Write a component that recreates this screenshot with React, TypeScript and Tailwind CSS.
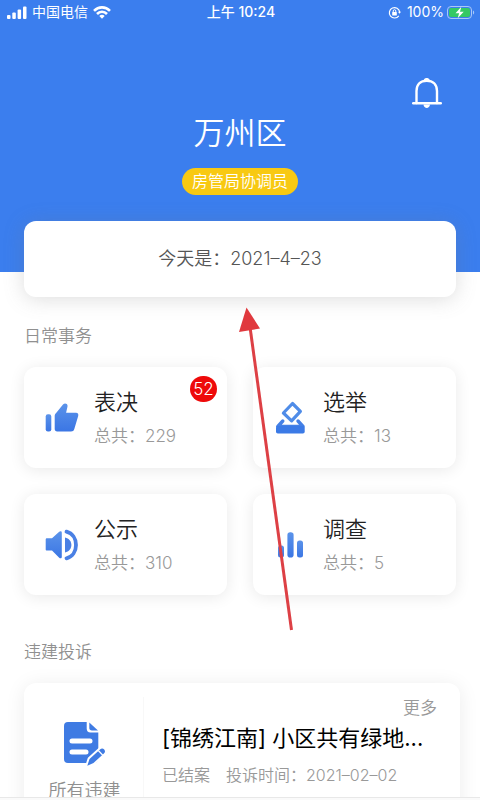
import React from 'react';

type Category = {
  title: string;
  total: number;
  badge?: number;
  icon: React.ReactNode;
};

const ThumbIcon = () => (
  <svg viewBox="0 0 34 34" className="h-[34px] w-[34px] shrink-0" fill="url(#iconBlue)" aria-hidden="true">
    <rect x="0.7" y="13.2" width="5.6" height="17.3" rx="2.2" />
    <path d="M9.7 15c0-1.2.4-2 1.2-2.8L18 3.6c1.2-1.5 2.7-1.5 3.8-.5.8.8.9 1.9.6 3l-1.3 5.7H31c2 0 2.7 1.5 2.2 3.2l-3.9 13c-.6 1.8-1.6 2.5-3.3 2.5H12.2c-1.6 0-2.5-.9-2.5-2.5z" />
  </svg>
);

const BallotIcon = () => (
  <svg viewBox="0 0 34 34" className="h-[34px] w-[34px] shrink-0" aria-hidden="true">
    <path d="M18.5 2.5L26.4 10.4 17.6 19.8 9.4 12z" fill="none" stroke="#4f8ce8" strokeWidth="3.2" strokeLinejoin="round" />
    <path d="M8.8 20L3.8 25.5H29L24 20" fill="none" stroke="#4480e6" strokeWidth="3.4" strokeLinejoin="round" strokeLinecap="round" />
    <rect x="2" y="25" width="28.7" height="7.5" rx="1.8" fill="#3b7ae6" />
  </svg>
);

const SpeakerIcon = () => (
  <svg viewBox="0 0 34 34" className="h-[34px] w-[34px] shrink-0" aria-hidden="true">
    <path d="M2 10.3H7L14.2 3.8c1.2-1 2.6-.6 2.6.9V28.9c0 1.500-1.400 1.900-2.600.9L7 22.600H2C1.100 22.600.7 22.100.7 21.400V11.500c0-.8.5-1.200 1.300-1.200z" fill="url(#iconBlue)" />
    <path d="M20 9.500c4 1 6.400 3.900 6.400 7.500s-2.400 6.500-6.400 7.500z" fill="#4a80e4" />
    <path d="M21.5 3.7C27.5 5.4 31 10.5 31 17s-3.5 11.700-9.500 13.300" fill="none" stroke="#4a80e4" strokeWidth="3.800" strokeLinecap="round" />
  </svg>
);

const BarsIcon = () => (
  <svg viewBox="0 0 34 34" className="h-[34px] w-[34px] shrink-0" fill="url(#iconBlue)" aria-hidden="true">
    <rect x="4" y="17.5" width="6" height="12" rx="2.5" />
    <rect x="13.4" y="4.3" width="6.2" height="25.2" rx="2.8" />
    <rect x="23" y="12.5" width="6" height="17" rx="2.5" />
  </svg>
);

const DocIcon = () => (
  <svg viewBox="0 0 42 45" className="h-[45px] w-[42px]" aria-hidden="true">
    <path d="M4 0H22.7V6.5c0 2.5 1.3 3.9 3.8 3.9H34.3V37c0 2.7-1.3 4-4 4H4c-2.7 0-4-1.3-4-4V4C0 1.3 1.3 0 4 0z" fill="#3f7be3" />
    <path d="M25.3.6L34 8.4H28c-1.8 0-2.7-.9-2.7-2.7z" fill="#3f7be3" />
    <path d="M8 19H26M8 30H22" stroke="#fff" strokeWidth="5" strokeLinecap="round" />
    <path d="M23.3 44L25.5 37 36 27.5c1.5-1.3 3-1.2 4.2.1 1.2 1.4 1 2.9-.3 4L29.5 41z" fill="#3f7be3" stroke="#fff" strokeWidth="4" strokeLinejoin="round" />
    <path d="M23.3 43.8L25.5 37 36 27.5c1.5-1.3 3-1.2 4.2.1 1.2 1.4 1 2.9-.3 4L29.5 41z" fill="#3f7be3" />
    <path d="M34.3 28.5L39 33.5" stroke="#fff" strokeWidth="1.2" />
  </svg>
);

const categories: Category[] = [
  { title: '表决', total: 229, badge: 52, icon: <ThumbIcon /> },
  { title: '选举', total: 13, icon: <BallotIcon /> },
  { title: '公示', total: 310, icon: <SpeakerIcon /> },
  { title: '调查', total: 5, icon: <BarsIcon /> },
];

const StatusBar = () => (
  <div className="grid h-6 grid-cols-3 items-center pr-[5px] pl-[7px] text-sm leading-6 font-normal">
    <div className="flex items-center gap-[5px]">
      <svg viewBox="0 0 20 13" className="h-[13px] w-5" fill="#fff" aria-hidden="true">
        <rect x="0" y="9" width="3.5" height="4" rx="1" />
        <rect x="5.3" y="6.5" width="3.5" height="6.5" rx="1" />
        <rect x="10.6" y="3.5" width="3.5" height="9.5" rx="1" />
        <rect x="16" y="0.5" width="3.5" height="12.5" rx="1" />
      </svg>
      <span>中国电信</span>
      <svg viewBox="0 0 18 13" className="h-[13px] w-[18px]" fill="none" stroke="#fff" strokeWidth="2.6" aria-hidden="true">
        <path d="M1 4.8C5.5.2 12.5.2 17 4.8" />
        <path d="M4 8C6.8 5 11.2 5 14 8" />
        <path d="M9 12.7L6.3 9.9c1.5-1.4 3.9-1.4 5.4 0z" fill="#fff" stroke="none" />
      </svg>
    </div>
    <div className="text-center font-medium">上午 10:24</div>
    <div className="flex items-center justify-end gap-[3px]">
      <svg viewBox="0 0 13 13" className="mr-[3px] h-[13px] w-[13px]" fill="none" stroke="#fff" strokeWidth="1.2" aria-hidden="true">
        <path d="M10.8 9.8A5.2 5.2 0 1 1 11.7 6" />
        <path d="M10 5.8h3l-1.5 2z" fill="#fff" stroke="none" />
        <rect x="4.2" y="6" width="4.6" height="3.4" rx="0.5" fill="#fff" stroke="none" />
        <path d="M5.2 6V5a1.3 1.3 0 0 1 2.6 0v1" strokeWidth="1" />
      </svg>
      <span>100%</span>
      <svg viewBox="0 0 28 13" className="h-[13px] w-7" aria-hidden="true">
        <rect x="0.5" y="0.5" width="24" height="12" rx="3.5" fill="none" stroke="#a9c8f8" />
        <rect x="2" y="2" width="21" height="9" rx="2" fill="#35c964" />
        <path d="M26 4.5c1.6.5 1.6 3.5 0 4z" fill="#a9c8f8" />
        <path d="M14.3.8L8.5 7.2h3.6L10.7 12.2 16.7 5.8H13z" fill="#fff" />
      </svg>
    </div>
  </div>
);

const CategoryCard = ({ title, total, badge, icon }: Category) => (
  <button
    type="button"
    className="relative flex h-[101px] items-center rounded-xl bg-white pl-[21px] text-left shadow-[0_2px_16px_rgba(0,0,0,0.09)]"
  >
    {icon}
    <span className="ml-[15px] flex flex-col pt-[2px]">
      <span className="text-[22px] leading-[34px] text-[#222222]">{title}</span>
      <span className="text-[17px] leading-[34px] text-[#999999]">总共：{total}</span>
    </span>
    {badge && (
      <span className="absolute top-[9px] right-[10px] flex h-[26px] w-[27px] items-center justify-center rounded-full bg-[#ee0a0a] pt-[2px] text-[17px] text-white">
        {badge}
      </span>
    )}
  </button>
);

const App = () => {
  return (
    <div className="relative flex h-screen flex-col overflow-hidden bg-white font-['Inter','Noto_Sans_CJK_SC',sans-serif] font-[350]">
      <svg className="absolute h-0 w-0" aria-hidden="true">
        <defs>
          <linearGradient id="iconBlue" x1="0" y1="0" x2="0" y2="1">
            <stop offset="0" stopColor="#5b93ea" />
            <stop offset="1" stopColor="#3b76e4" />
          </linearGradient>
        </defs>
      </svg>

      <header className="shrink-0 bg-[#3b7eee] pb-[77px] text-white">
        <StatusBar />
        <div className="flex justify-end pt-[54px] pr-[38px]">
          <button type="button" aria-label="通知">
            <svg viewBox="0 0 30 30" className="h-[30px] w-[30px]" fill="none" stroke="#fff" strokeWidth="2.4" strokeLinecap="round">
              <path d="M4.5 25V13C4.5 6.5 8.5 2.7 14.7 2.7S25 6.5 25 13V25" />
              <path d="M1.2 25.3H28.8" />
              <path d="M12.5 2.2C12.8.2 16.6.2 17 2.2" fill="#fff" strokeWidth="1.5" />
              <path d="M11.5 26.5H18c-.3 4.5-6.2 4.5-6.5 0z" fill="#fff" stroke="none" />
            </svg>
          </button>
        </div>
        <div className="mt-[5px] flex flex-col items-center">
          <h1 className="text-[31px] leading-10">万州区</h1>
          <p className="mt-[15px] h-[27px] rounded-full bg-[#f8c912] px-[10px] text-base leading-[27px]">房管局协调员</p>
        </div>
      </header>

      <main className="min-h-0 flex-1">
        <div className="relative mx-6 -mt-[51px] flex h-[76px] items-center justify-center rounded-xl bg-white text-[#555555] shadow-[0_2px_20px_rgba(120,120,120,0.25)]">
          <p className="text-lg">今天是：2021–4–23</p>
        </div>

        <section className="px-6">
          <h2 className="mt-[26px] mb-[18px] text-[17px] leading-[26px] text-[#909090]">日常事务</h2>
          <div className="grid grid-cols-2 gap-[26px]">
            {categories.map((item) => (
              <CategoryCard key={item.title} {...item} />
            ))}
          </div>
        </section>

        <section className="pr-5 pl-6">
          <h2 className="mt-[44px] mb-[18px] text-[17px] leading-[26px] text-[#909090]">违建投诉</h2>
          <div className="flex h-40 rounded-xl bg-white shadow-[0_2px_20px_rgba(0,0,0,0.08)]">
            <button type="button" className="my-[14px] flex w-[120px] shrink-0 flex-col items-center border-r border-[#f8f8f8] pt-[25px] pl-[2px]">
              <DocIcon />
              <span className="mt-[11px] text-lg leading-[26px] text-[#909090]">所有违建</span>
            </button>
            <div className="min-w-0 flex-1 pt-3 pr-[23px] pl-[18px]">
              <a href="#more" className="block text-right text-[17px] leading-[26px] text-[#999999]">更多</a>
              <h3 className="text-[22px] leading-[34px] font-normal whitespace-nowrap text-black">[锦绣江南] 小区共有绿地...</h3>
              <p className="mt-[7px] flex gap-4 text-base leading-[26px] whitespace-nowrap text-[#999999]">
                <span>已结案</span>
                <span>投诉时间：2021–02–02</span>
              </p>
            </div>
          </div>
        </section>
      </main>

      <nav className="relative h-[3px] shrink-0 border-t border-[#e8e8e8] bg-[#fafafa]" />

      {/* red pointer to the date card */}
      <svg viewBox="0 0 56 326" className="pointer-events-none absolute top-[307px] left-[238px] h-[326px] w-14" aria-hidden="true">
        <path d="M12 20L53.5 323" stroke="#dd4045" strokeWidth="3" />
        <path d="M8.5 0.5L22 21.5 1 25z" fill="#e0393e" />
      </svg>
    </div>
  );
};

export default App;
